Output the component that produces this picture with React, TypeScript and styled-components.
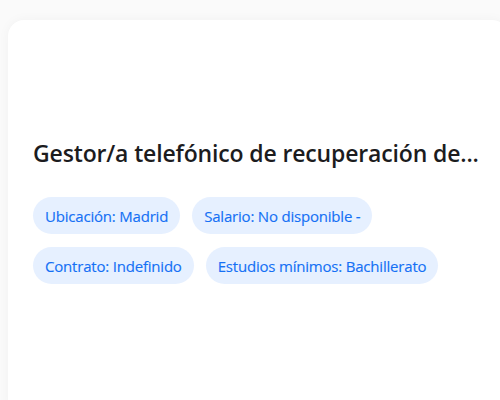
import React from 'react';
import styled, { createGlobalStyle } from 'styled-components';

const GlobalStyle = createGlobalStyle`
  html, body {
    margin: 0;
    padding: 0;
    background-color: #fafafa;
    font-family: "Open Sans", "Noto Sans", Arial, sans-serif;
    overflow: hidden;
  }
`;

const Page = styled.main`
  height: 400px;
  padding: 20px 0 0 8px;
  box-sizing: border-box;
  overflow: hidden;
`;

const Card = styled.section`
  width: 500px;
  height: 400px;
  box-sizing: border-box;
  padding: 118px 24px 0 25px;
  background-color: #fff;
  border-radius: 16px;
  box-shadow: 0 0 12px rgba(0, 0, 0, 0.04);
`;

const Title = styled.h2`
  margin: 0 0 29px;
  font-size: 23px;
  font-weight: 600;
  line-height: 30px;
  color: #1c1c1e;
  white-space: nowrap;
  letter-spacing: -0.15px;
`;

const Tags = styled.div`
  display: flex;
  flex-wrap: wrap;
  gap: 13px 12px;
`;

const Tag = styled.span`
  display: inline-flex;
  align-items: center;
  height: 37px;
  padding: 0 12px;
  border-radius: 19px;
  background-color: #e6f0ff;
  color: #1570f5;
  font-size: 15px;
  font-weight: 500;
  letter-spacing: -0.2px;
  -webkit-text-stroke: 0.15px #1570f5;
`;

const tags = [
  'Ubicación: Madrid',
  'Salario: No disponible -',
  'Contrato: Indefinido',
  'Estudios mínimos: Bachillerato',
];

const App = () => {
  return (
    <Page>
      <GlobalStyle />
      <Card>
        <Title>Gestor/a telefónico de recuperación de...</Title>
        <Tags>
          {tags.map((t) => (
            <Tag key={t}>{t}</Tag>
          ))}
        </Tags>
      </Card>
    </Page>
  );
};

export default App;
